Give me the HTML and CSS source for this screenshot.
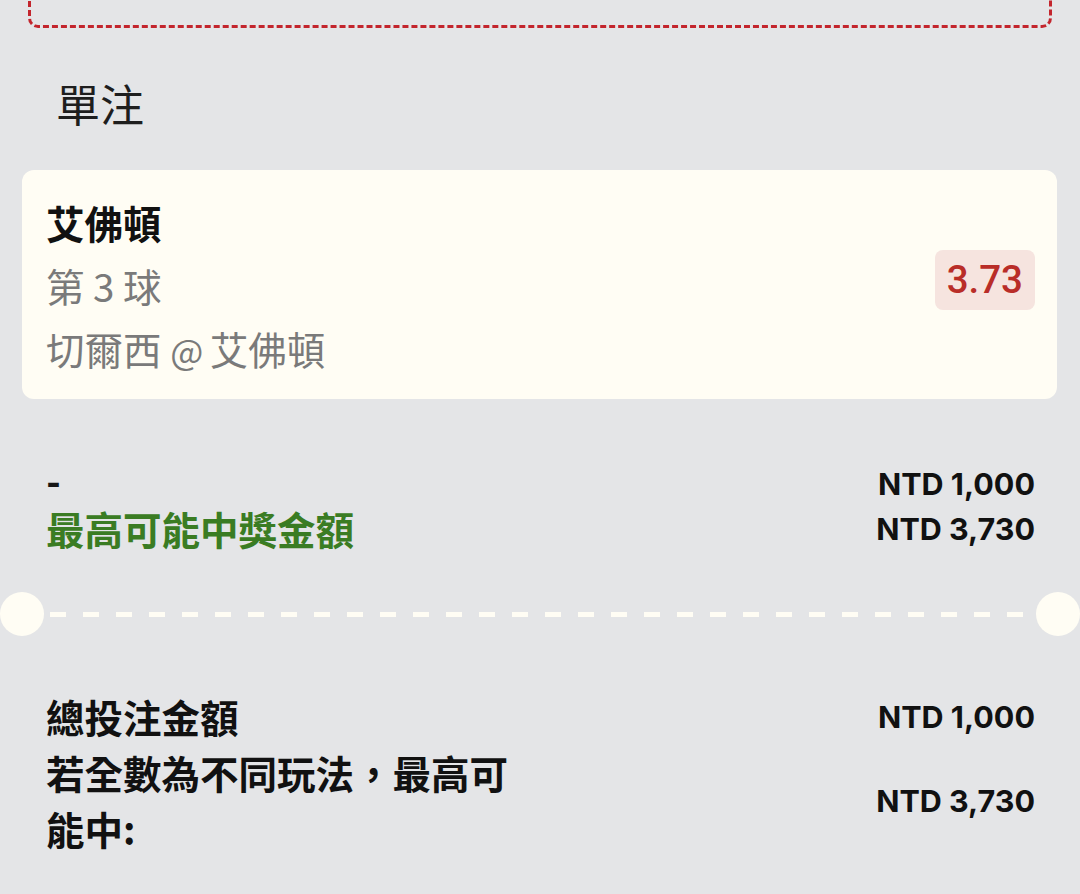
FILE: index.html
```html
<!DOCTYPE html>
<html lang="zh-Hant">
<head>
<meta charset="utf-8">
<link rel="stylesheet" href="styles.css">
</head>
<body>
<div class="prev-box"></div>
<h2 class="section-title">單注</h2>
<div class="bet-card">
  <div class="bet-info">
    <div class="bet-team">艾佛頓</div>
    <div class="bet-sub">第 3 球</div>
    <div class="bet-sub">切爾西 <span class="at">@</span> 艾佛頓</div>
  </div>
  <div class="odds">3.73</div>
</div>
<div class="summary">
  <div class="sum-row">
    <span class="dash-label">-</span>
    <span class="amount">NTD 1,000</span>
  </div>
  <div class="sum-row">
    <span class="win-label">最高可能中獎金額</span>
    <span class="amount">NTD 3,730</span>
  </div>
</div>
<div class="ticket-sep">
  <span class="notch"></span>
  <span class="sep-line"></span>
  <span class="notch"></span>
</div>
<div class="totals">
  <div class="total-row">
    <span class="total-label">總投注金額</span>
    <span class="amount">NTD 1,000</span>
  </div>
  <div class="total-row">
    <span class="total-label">若全數為不同玩法，最高可能中:</span>
    <span class="amount">NTD 3,730</span>
  </div>
</div>
</body>
</html>
```

FILE: styles.css
```css
html, body {
  margin: 0;
  padding: 0;
}
body {
  background: #e4e5e7;
  font-family: "Roboto", "Noto Sans CJK TC", sans-serif;
  color: #161616;
  width: 1080px;
  height: 894px;
  overflow: hidden;
}
.prev-box {
  margin: -20px 28px 0;
  height: 48px;
  box-sizing: border-box;
  border: 3px dashed #c3252d;
  border-top: 0;
  border-radius: 0 0 10px 10px;
}
.section-title {
  margin: 45px 0 0;
  padding-left: 56px;
  font-family: "Noto Sans CJK TC", sans-serif;
  font-size: 44px;
  font-weight: 400;
  line-height: 60px;
  color: #1e1e1e;
}
.bet-card {
  margin: 37px 23px 0 22px;
  padding: 21px 22px 18px 24px;
  background: #fffdf4;
  border-radius: 12px;
  display: flex;
  align-items: center;
  justify-content: space-between;
}
.bet-info {
  font-family: "Noto Sans CJK TC", sans-serif;
  font-size: 38.5px;
  line-height: 63px;
}
.bet-team {
  font-weight: 700;
  color: #111;
}
.bet-sub {
  color: #7a7a7a;
}
.at {
  font-size: 35px;
  letter-spacing: -2px;
}
.odds {
  margin-bottom: 12px;
  padding: 0 12px;
  height: 60px;
  line-height: 60px;
  border-radius: 8px;
  background: #f6e4df;
  color: #b92d28;
  font-family: "Roboto", sans-serif;
  font-size: 38.5px;
  font-weight: 500;
}
.summary {
  margin-top: 62px;
  padding: 0 45px 0 46px;
}
.sum-row {
  display: flex;
  justify-content: space-between;
  align-items: center;
  height: 45px;
}
.dash-label {
  font-size: 38.5px;
  line-height: 45px;
  font-weight: 700;
}
.win-label {
  font-family: "Noto Sans CJK TC", sans-serif;
  font-size: 38.5px;
  line-height: 45px;
  font-weight: 700;
  color: #3a7c23;
}
.amount {
  font-family: "Inter", sans-serif;
  font-size: 30.5px;
  font-weight: 700;
  color: #111;
  white-space: nowrap;
}
.ticket-sep {
  margin-top: 41px;
  height: 44px;
  display: flex;
  align-items: center;
}
.notch {
  flex: none;
  width: 44px;
  height: 44px;
  border-radius: 50%;
  background: #fffdf4;
}
.sep-line {
  flex: 1;
  margin: 0 6px;
  height: 5px;
  background: repeating-linear-gradient(90deg, #fffdf4 0 16px, transparent 16px 33px);
}
.totals {
  margin-top: 52px;
  padding: 0 45px 0 46px;
}
.total-row {
  display: flex;
  justify-content: space-between;
  align-items: center;
}
.total-label {
  flex: 0 0 480px;
  font-family: "Noto Sans CJK TC", sans-serif;
  font-size: 38.5px;
  font-weight: 700;
  line-height: 56px;
  color: #111;
}
```
